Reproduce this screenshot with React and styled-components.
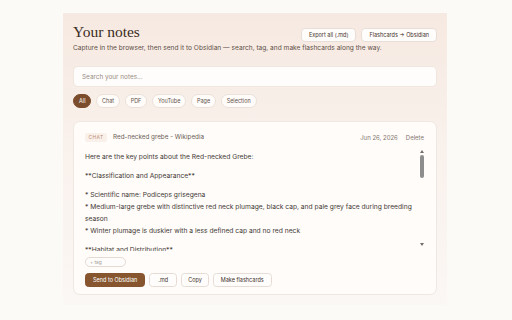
import React from "react";
import styled, { createGlobalStyle } from "styled-components";

const Global = createGlobalStyle`
  html, body { margin: 0; padding: 0; background: #fcfaf7; }
  * { box-sizing: border-box; }
`;

const Page = styled.div`
  width: 512px;
  height: 320px;
  padding-top: 13px;
  font-family: Inter, "Liberation Sans", sans-serif;
`;

const Panel = styled.div`
  width: 384px;
  height: 292px;
  margin-left: 63px;
  padding: 10px 10px 10px;
  background: linear-gradient(180deg, #f6e9e1 0%, #f9f1ec 45%, #fbf7f4 100%);
  display: flex;
  flex-direction: column;
`;

const HeaderRow = styled.div`
  display: flex;
  justify-content: space-between;
  align-items: flex-start;
`;

const Title = styled.h1`
  margin: 0;
  font-family: "Liberation Serif", "DejaVu Serif", serif;
  font-weight: 400;
  font-size: 15.5px;
  line-height: 18px;
  color: #3b2b22;
`;

const Subtitle = styled.p`
  margin: 1px 0 0;
  font-size: 6.6px;
  line-height: 10px;
  color: #5e4f47;
  white-space: nowrap;
`;

const Actions = styled.div`
  display: flex;
  gap: 5px;
  margin-top: 5px;
`;

const GhostButton = styled.button`
  height: 14px;
  padding: 0 ${(p) => p.$pad || 6}px;
  border: 1px solid #e8ded7;
  border-radius: 4px;
  background: #fffdfb;
  font-family: Inter, "Liberation Sans", sans-serif;
  font-size: 5.5px;
  color: #3f322b;
  white-space: nowrap;
`;

const Search = styled.div`
  margin-top: 13px;
  height: 21px;
  border: 1px solid #efe6e0;
  border-radius: 5px;
  background: #fffdfb;
  display: flex;
  align-items: center;
  padding-left: 8px;
  font-size: 6.4px;
  color: #978c85;
`;

const Chips = styled.div`
  display: flex;
  gap: 4.5px;
  margin-top: 7px;
`;

const Chip = styled.div`
  height: 14px;
  padding: 0 5px;
  border-radius: 7px;
  border: 1px solid ${(p) => (p.$active ? "#7c4d2c" : "#ebe1da")};
  background: ${(p) => (p.$active ? "#7c4d2c" : "#fffcfa")};
  color: ${(p) => (p.$active ? "#ffffff" : "#5f524b")};
  font-size: 5.5px;
  display: flex;
  align-items: center;
`;

const Card = styled.div`
  margin-top: 13px;
  flex: 1;
  background: #fffcfa;
  border: 1px solid #efe7e1;
  border-radius: 7px;
  padding: 10px 10px 0 11px;
  display: flex;
  flex-direction: column;
`;

const CardHeader = styled.div`
  display: flex;
  align-items: center;
  height: 10px;
  padding-right: 2px;
`;

const Badge = styled.span`
  font-size: 4.8px;
  letter-spacing: 0.5px;
  color: #b98a74;
  background: #faf0ea;
  border-radius: 2px;
  padding: 1.5px 3.5px;
  text-transform: uppercase;
`;

const SourceTitle = styled.span`
  margin-left: 6px;
  font-size: 6.3px;
  color: #6b5d55;
`;

const Meta = styled.span`
  margin-left: auto;
  display: flex;
  gap: 8px;
  font-size: 6px;
  color: #857870;
`;

const Body = styled.div`
  margin-top: 5px;
  height: 104px;
  display: flex;
`;

const Content = styled.div`
  flex: 1;
  overflow: hidden;
  padding-top: 4px;
  font-size: 6.7px;
  line-height: 12px;
  color: #433a35;
  display: flex;
  flex-direction: column;
  gap: 7px;
`;

const Para = styled.div`
  flex-shrink: 0;
`;

const Line = styled.div``;

const ScrollTrack = styled.div`
  width: 9px;
  display: flex;
  flex-direction: column;
  align-items: center;
  padding: 3px 0;
`;

const Arrow = styled.div`
  width: 0;
  height: 0;
  border-left: 2.5px solid transparent;
  border-right: 2.5px solid transparent;
  ${(p) =>
    p.$down
      ? "border-top: 3px solid #6e6e6e; margin-top: auto; margin-bottom: 2px;"
      : "border-bottom: 3px solid #6e6e6e;"}
`;

const Thumb = styled.div`
  margin-top: 2px;
  width: 4px;
  height: 23px;
  border-radius: 2px;
  background: #8d8d8d;
`;

const TagInput = styled.div`
  margin-top: 6px;
  width: 41px;
  height: 10px;
  border: 1px solid #e4dad3;
  border-radius: 5px;
  background: #fffdfb;
  font-size: 4.8px;
  color: #a59a93;
  display: flex;
  align-items: center;
  padding-left: 4px;
`;

const ButtonRow = styled.div`
  display: flex;
  gap: 4px;
  margin-top: 6px;
`;

const ActionButton = styled.button`
  height: 14px;
  padding: 0 ${(p) => p.$pad || 6}px;
  border-radius: 3.5px;
  border: 1px solid ${(p) => (p.$primary ? "#86542f" : "#e6dcd5")};
  background: ${(p) => (p.$primary ? "#87562f" : "#fffdfb")};
  color: ${(p) => (p.$primary ? "#ffffff" : "#3f322b")};
  font-family: Inter, "Liberation Sans", sans-serif;
  font-size: 5.5px;
  white-space: nowrap;
`;

const paragraphs = [
  ["Here are the key points about the Red-necked Grebe:"],
  ["**Classification and Appearance**"],
  [
    "* Scientific name: Podiceps grisegena",
    "* Medium-large grebe with distinctive red neck plumage, black cap, and pale grey face during breeding season",
    "* Winter plumage is duskier with a less defined cap and no red neck",
  ],
  ["**Habitat and Distribution**"],
];

const chips = ["All", "Chat", "PDF", "YouTube", "Page", "Selection"];

export default function App() {
  return (
    <Page>
      <Global />
      <Panel>
        <HeaderRow>
          <Title>Your notes</Title>
          <Actions>
            <GhostButton $pad={7}>Export all (.md)</GhostButton>
            <GhostButton $pad={7}>Flashcards → Obsidian</GhostButton>
          </Actions>
        </HeaderRow>
        <Subtitle>
          Capture in the browser, then send it to Obsidian — search, tag, and make flashcards along the way.
        </Subtitle>
        <Search>Search your notes...</Search>
        <Chips>
          {chips.map((c, i) => (
            <Chip key={c} $active={i === 0}>
              {c}
            </Chip>
          ))}
        </Chips>
        <Card>
          <CardHeader>
            <Badge>Chat</Badge>
            <SourceTitle>Red-necked grebe - Wikipedia</SourceTitle>
            <Meta>
              <span>Jun 26, 2026</span>
              <span>Delete</span>
            </Meta>
          </CardHeader>
          <Body>
            <Content>
              {paragraphs.map((p, i) => (
                <Para key={i}>
                  {p.map((l, j) => (
                    <Line key={j}>{l}</Line>
                  ))}
                </Para>
              ))}
            </Content>
            <ScrollTrack>
              <Arrow />
              <Thumb />
              <Arrow $down />
            </ScrollTrack>
          </Body>
          <TagInput>+ tag</TagInput>
          <ButtonRow>
            <ActionButton $primary $pad={7}>Send to Obsidian</ActionButton>
            <ActionButton $pad={8}>.md</ActionButton>
            <ActionButton $pad={6}>Copy</ActionButton>
            <ActionButton $pad={7}>Make flashcards</ActionButton>
          </ButtonRow>
        </Card>
      </Panel>
    </Page>
  );
}
